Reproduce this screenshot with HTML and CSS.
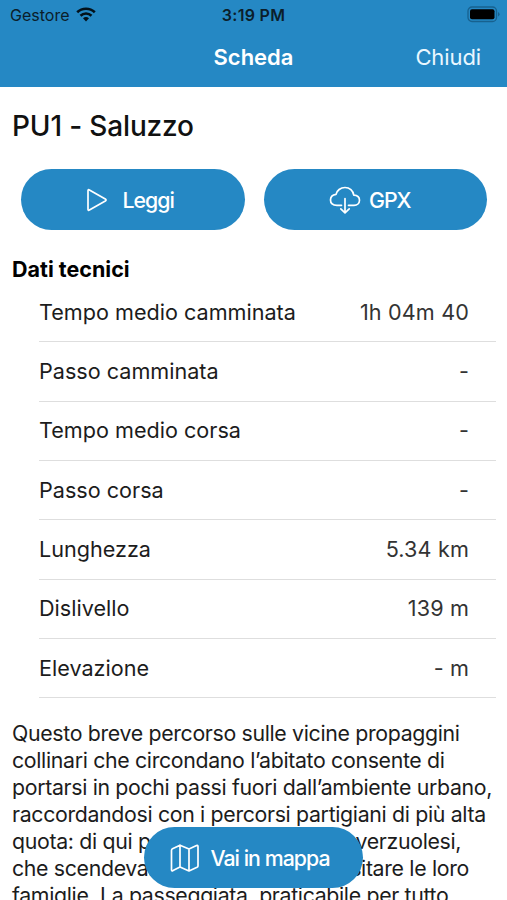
FILE: index.html
```
<!DOCTYPE html>
<html lang="it">
<head>
    <meta charset="UTF-8">
    <meta name="viewport" content="width=device-width, initial-scale=1.0">
    <title>Scheda</title>
    <link rel="stylesheet" href="styles.css">
</head>
<body>
    <header class="header">
        <div class="status-bar">
            <div class="carrier">
                <span>Gestore</span>
                <svg class="wifi" viewBox="0 0 20 15">
                    <path d="M1.2 5.3a12.6 12.6 0 0 1 17.6 0" />
                    <path d="M4.5 8.7a7.9 7.9 0 0 1 11 0" />
                    <path class="wifi-dot" d="M7 11.3a4.4 4.4 0 0 1 6 0L10 14.4z" />
                </svg>
            </div>
            <span class="time">3:19 PM</span>
            <svg class="battery" viewBox="0 0 33 17">
                <rect class="battery-frame" x="1" y="1" width="28.5" height="14.5" rx="4" />
                <rect x="3" y="3.2" width="24.5" height="10" rx="2" />
                <path class="battery-cap" d="M31 6v4.5q1.6-.7 1.6-2.2T31 6z" />
            </svg>
        </div>
        <div class="nav-bar">
            <h1>Scheda</h1>
            <a href="#" class="close">Chiudi</a>
        </div>
    </header>

    <main class="content">
        <h2>PU1 - Saluzzo</h2>
        <div class="actions">
            <button type="button" class="button">
                <svg class="icon-play" viewBox="0 0 22 24">
                    <path d="M2 2.700v18.600q0 1.500 1.400.8L19.300 13q1.500-1 0-2L3.400 1.900Q2 1.200 2 2.700z" />
                </svg>
                <span>Leggi</span>
            </button>
            <button type="button" class="button button-gpx">
                <svg class="icon-cloud" viewBox="0 0 32 28">
                    <path d="M12.5 19.300H8C4 19.300 1.500 17.200 1.500 14c0-3 2.200-5.200 5.500-5.600C7.800 4.600 11.500 1.500 16 1.500c4.600 0 8.200 3.200 8.800 7.700 3.600.2 5.700 2.200 5.700 5s-2.300 5.100-5.500 5.100h-5.500" />
                    <path d="M16 12.500v13.500M11.800 22.800l4.200 4 4.200-4" />
                </svg>
                <span>GPX</span>
            </button>
        </div>

        <h3>Dati tecnici</h3>
        <ul class="data-list">
            <li><span>Tempo medio camminata</span><span class="value">1h 04m 40</span></li>
            <li><span>Passo camminata</span><span class="value">-</span></li>
            <li><span>Tempo medio corsa</span><span class="value">-</span></li>
            <li><span>Passo corsa</span><span class="value">-</span></li>
            <li><span>Lunghezza</span><span class="value">5.34 km</span></li>
            <li><span>Dislivello</span><span class="value">139 m</span></li>
            <li><span>Elevazione</span><span class="value">- m</span></li>
        </ul>

        <p class="description">
            Questo breve percorso sulle vicine propaggini<br>
            collinari che circondano l’abitato consente di<br>
            portarsi in pochi passi fuori dall’ambiente urbano,<br>
            raccordandosi con i percorsi partigiani di più alta<br>
            quota: di qui passavano i partigiani verzuolesi,<br>
            che scendevano<span class="wide"> dalla pianura a </span>visitare le loro<br>
            famiglie. La passeggiata, praticabile per tutto
        </p>
    </main>

    <button type="button" class="button map-button">
        <svg class="icon-map" viewBox="0 0 30 28">
            <path d="M1.500 6.500Q1.500 5.300 2.500 4.800L10 1.200 19 5 26.500 1.600Q28 1 28 2.500V22q0 .8-1 1.300L19 27 10 23 3 26.600Q1.500 27.200 1.500 25.800zM10 1.200V23M19 5v22" />
        </svg>
        <span>Vai in mappa</span>
    </button>
</body>
</html>
```
FILE: styles.css
```
* {
    box-sizing: border-box;
}

body {
    margin: 0;
    height: 900px;
    overflow: hidden;
    background-color: #fff;
    color: #1c1c1c;
    font-family: 'Inter', sans-serif;
    font-size: 21.3px;
}

h1, h2, h3, ul, p {
    margin: 0;
    padding: 0;
}

svg {
    flex: none;
    fill: none;
    stroke: #fff;
    stroke-width: 1.7;
    stroke-linecap: round;
    stroke-linejoin: round;
}

.header {
    height: 87px;
    background-color: #2588c4;
}

.status-bar {
    display: grid;
    grid-template-columns: 1fr auto 1fr;
    align-items: center;
    height: 29px;
    padding: 0 7px 0 10px;
    color: #0b1e2b;
    font-size: 16px;
}

.carrier {
    display: flex;
    align-items: center;
    gap: 7px;
}

.wifi {
    width: 20px;
    height: 15px;
    stroke: #03111a;
    stroke-width: 2.6;
    stroke-linecap: butt;
}

.wifi .wifi-dot {
    fill: #03111a;
    stroke: none;
}

.time {
    padding-right: 3px;
    font-weight: 600;
    letter-spacing: 0.3px;
}

.battery {
    justify-self: end;
    width: 33px;
    height: 17px;
    fill: #000;
    stroke: none;
}

.battery .battery-frame {
    fill: none;
    stroke: #17618f;
    stroke-width: 1.3;
}

.battery .battery-cap {
    fill: #17618f;
}

.nav-bar {
    display: grid;
    grid-template-columns: 1fr auto 1fr;
    align-items: center;
    height: 56px;
    padding: 0 26px;
    color: #fff;
}

.nav-bar h1 {
    grid-column: 2;
    font-size: 22px;
    font-weight: 600;
}

.close {
    justify-self: end;
    color: #e9f7ff;
    font-size: 22px;
    letter-spacing: -0.1px;
    text-decoration: none;
}

.content {
    padding: 0 11px 0 12px;
}

.content h2 {
    padding-top: 21px;
    color: #111;
    font-size: 28px;
    font-weight: 450;
    line-height: 36px;
    letter-spacing: -0.15px;
}

.actions {
    display: grid;
    grid-template-columns: 1fr 1fr;
    gap: 19px;
    padding: 25px 9px 0 9px;
}

.button {
    display: flex;
    align-items: center;
    justify-content: center;
    height: 61px;
    padding: 0 5px 0 0;
    border: none;
    border-radius: 31px;
    background-color: #2588c4;
    color: #fff;
    font-family: inherit;
    font-size: 21.3px;
    font-weight: 450;
    letter-spacing: -0.95px;
    cursor: pointer;
}

.button-gpx {
    padding-right: 11px;
}

.icon-play {
    width: 22px;
    height: 24px;
    margin-right: 14px;
}

.icon-cloud {
    width: 32px;
    height: 28px;
    margin-right: 8px;
}

.content h3 {
    padding-top: 26px;
    color: #000;
    font-size: 21.5px;
    font-weight: 700;
    line-height: 27px;
}

.data-list {
    padding-left: 27px;
    font-size: 21.6px;
    list-style: none;
}

.data-list li {
    display: flex;
    align-items: center;
    justify-content: space-between;
    height: 59.33px;
    padding-right: 27px;
    padding-bottom: 1px;
    border-bottom: 1px solid #dedede;
}

.value {
    color: #333;
    letter-spacing: 0.15px;
}

.description {
    padding-top: 22px;
    line-height: 26.9px;
    letter-spacing: -0.33px;
    white-space: nowrap;
}

.wide {
    word-spacing: 1.9px;
}

.map-button {
    position: absolute;
    top: 827px;
    left: 144px;
    width: 219px;
    padding-right: 7px;
}

.icon-map {
    width: 30px;
    height: 28px;
    margin-right: 10px;
}
```
